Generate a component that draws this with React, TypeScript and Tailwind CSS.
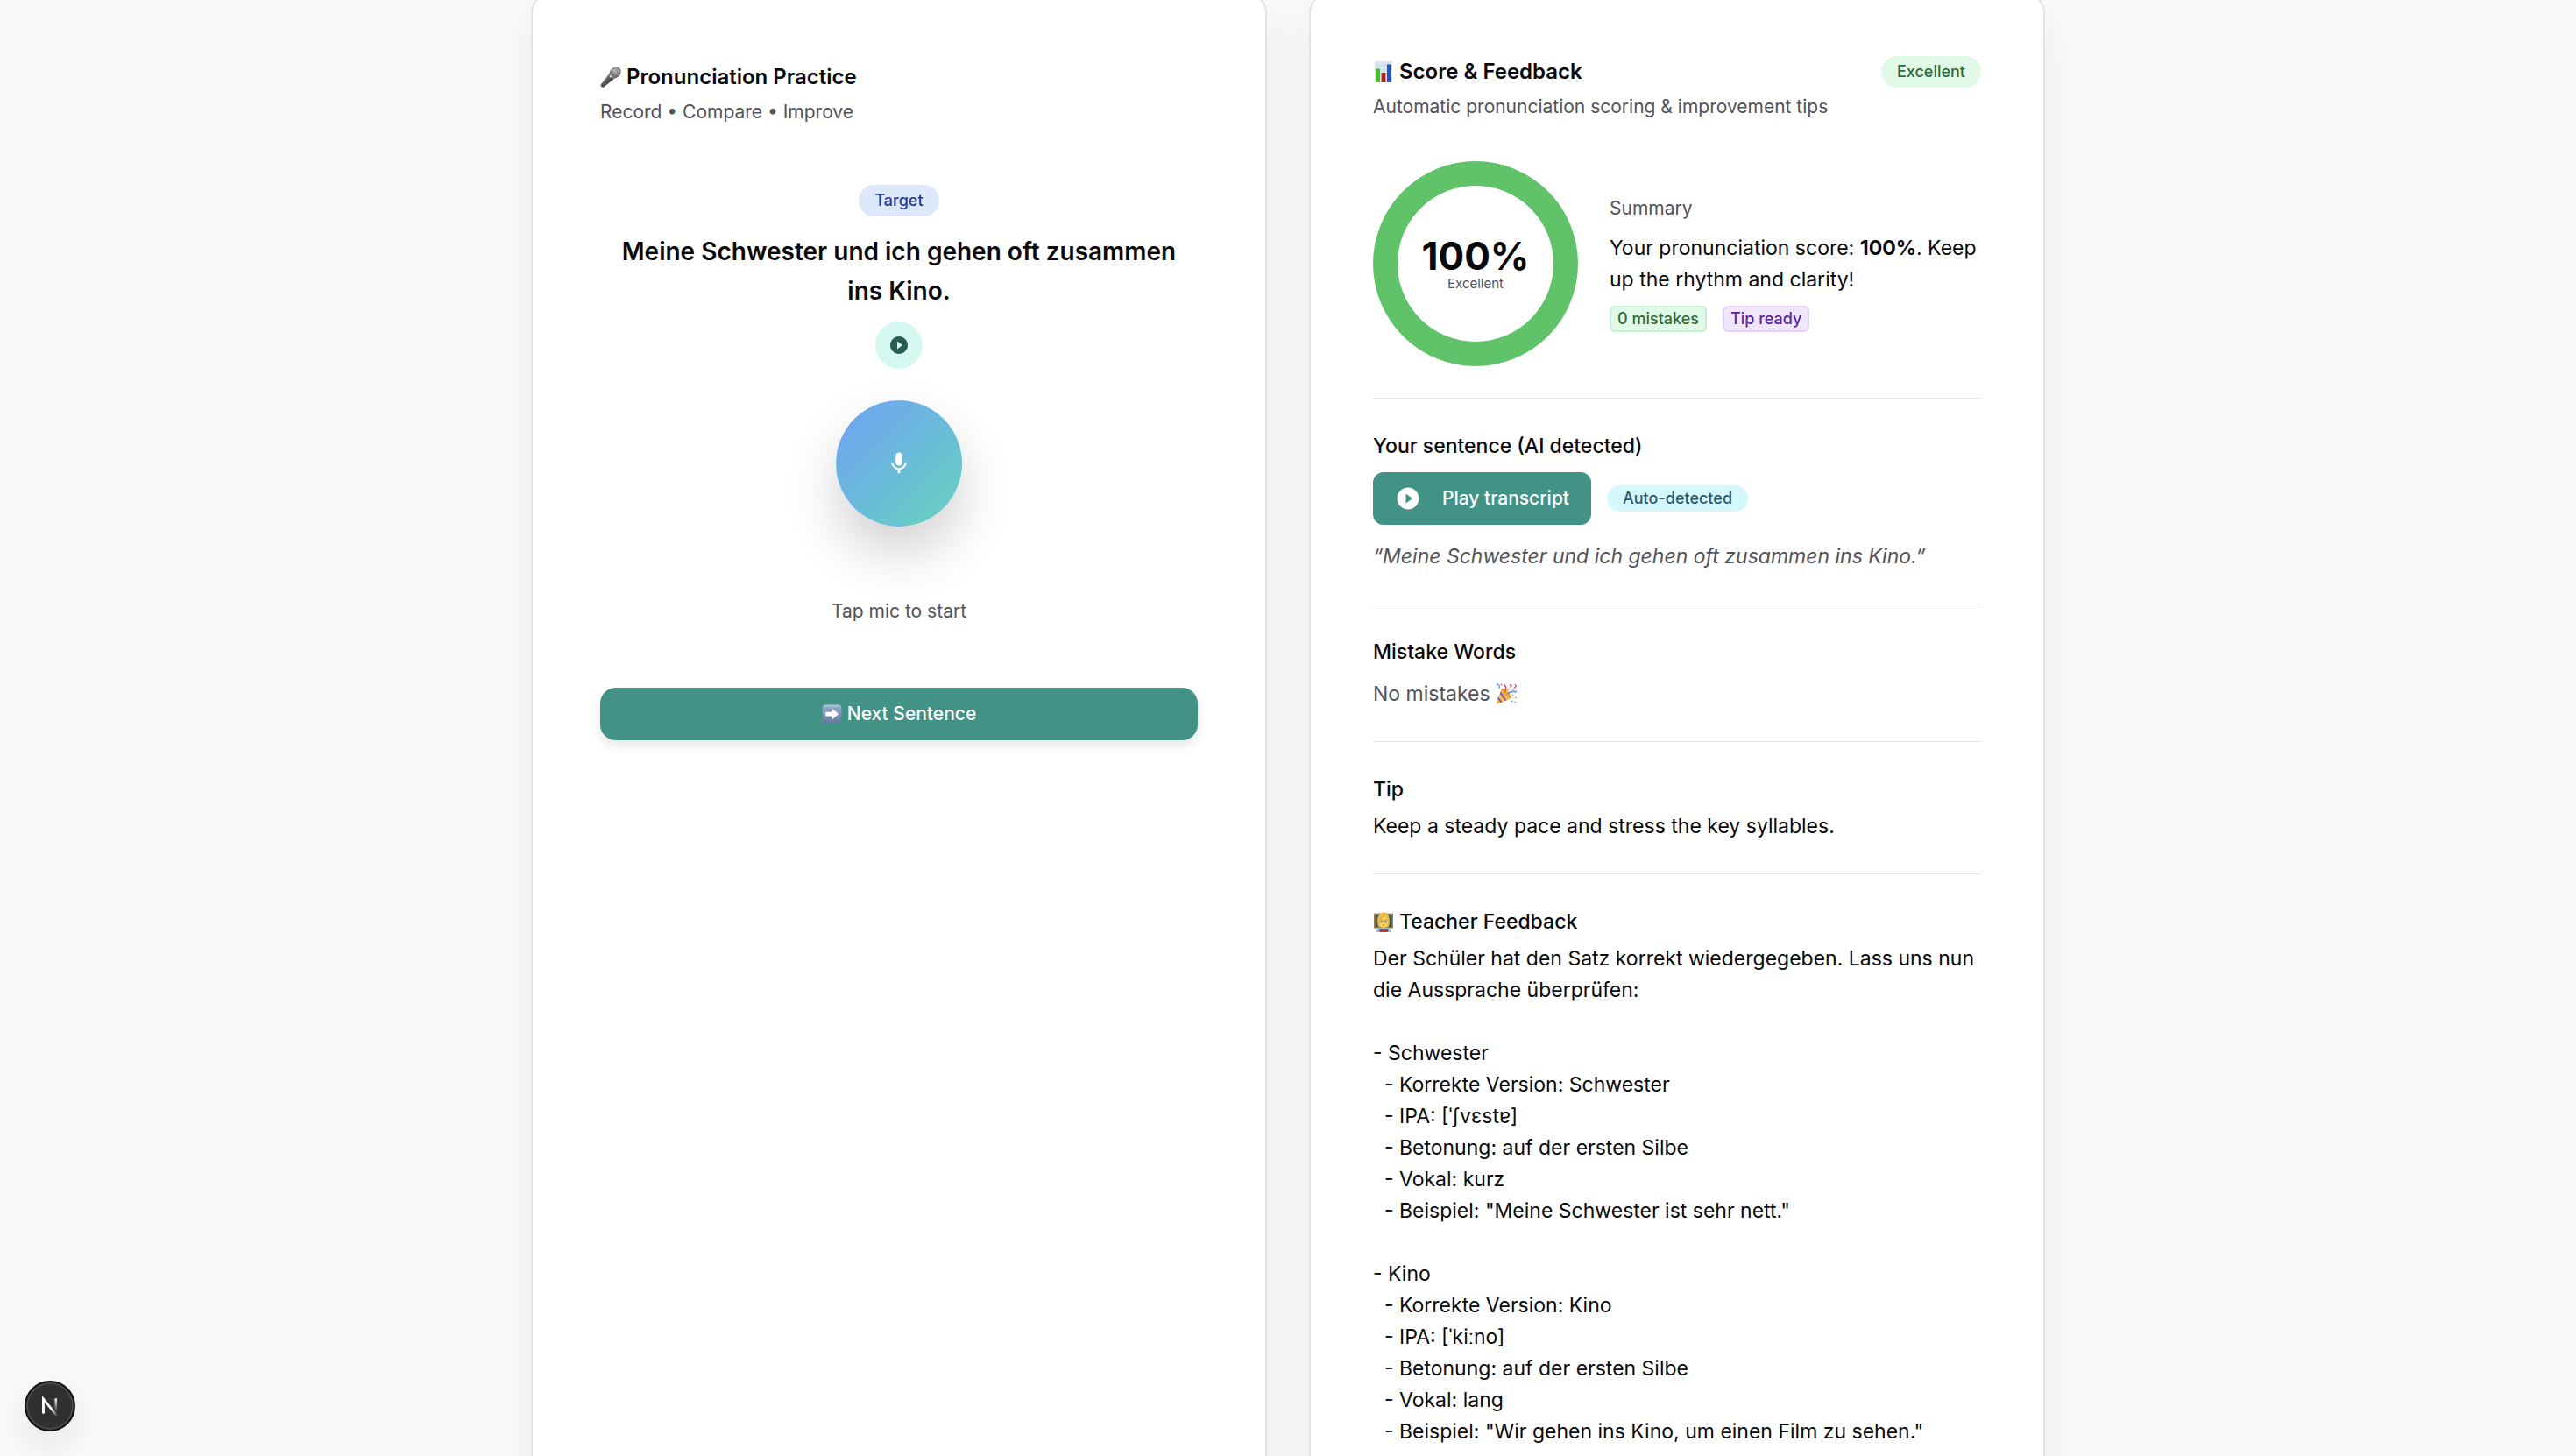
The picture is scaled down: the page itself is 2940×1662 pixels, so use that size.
import type { ReactNode } from "react";
import { MdMic, MdPlayCircleFilled } from "react-icons/md";

function MicrophoneIcon() {
  return (
    <svg viewBox="0 0 24 24" className="size-6 shrink-0" aria-hidden="true">
      <defs>
        <linearGradient id="mic-handle" x1="0" y1="0" x2="1" y2="1">
          <stop offset="0.3" stopColor="#8a8a8a" />
          <stop offset="0.55" stopColor="#4a4a4a" />
          <stop offset="0.8" stopColor="#1f1f1f" />
        </linearGradient>
        <radialGradient id="mic-head" cx="0.5" cy="0.35" r="0.7">
          <stop offset="0" stopColor="#b5b5b5" />
          <stop offset="1" stopColor="#4d4d4d" />
        </radialGradient>
      </defs>
      <path d="M11.6 6.6 L17.6 12.4 L4 23.6 Q2.6 24.2 1.2 23 Q0 21.8 0.6 20.4 Z" fill="url(#mic-handle)" />
      <path d="M10.6 9.2 C10.4 4 14 0.4 18.4 0.4 C21.6 0.4 23.8 2.8 23.6 5.8 C23.4 10 20 13.6 15 13.4 Z" fill="url(#mic-head)" />
      <path d="M10.6 8.4 L15.8 13.4" stroke="#a8a8a8" strokeWidth="1.1" />
      <path d="M14.2 3.4 L20.8 9.8 M17.8 1.6 L22.8 6.4" stroke="#c4c4c4" strokeWidth="0.7" />
      <circle cx="12" cy="11.4" r="1.1" fill="#e6e6e6" />
    </svg>
  );
}

function ChartIcon() {
  return (
    <svg viewBox="0 0 24 24" className="size-6 shrink-0" aria-hidden="true">
      <rect x="2" y="0" width="20" height="24" fill="#dde5ee" />
      <path d="M2 5 H22 M2 10 H22 M2 15 H22 M2 20 H22" stroke="#c6d2de" strokeWidth="0.6" />
      <rect x="3" y="8.5" width="5" height="15.5" fill="#4fb53c" />
      <rect x="9.6" y="13" width="4.8" height="11" fill="#b4261f" />
      <rect x="16" y="3.4" width="4.8" height="20.6" fill="#2556b8" />
    </svg>
  );
}

function PartyIcon() {
  return (
    <svg viewBox="0 0 24 24" className="size-6 shrink-0" aria-hidden="true">
      <path d="M7 6 L17 17.4 L2.4 23.6 Q0.4 24.2 0.6 22 Z" fill="#f2c14a" />
      <path d="M5.8 9.4 L12.6 19.2 L10.8 20 L4.8 11.8 Z M3.2 15.6 L7.4 21.4 L5.6 22.2 L2.4 18 Z" fill="#8a4fc4" />
      <path d="M6.4 6.4 C8.6 3.4 19 13.4 17.6 17.2 C14.6 18 6 10 6.4 6.4 Z" fill="#e0a832" />
      <path d="M10.6 9.4 C12.8 6.8 12.2 4 9.2 1" fill="none" stroke="#e0476a" strokeWidth="1.6" />
      <path d="M13.6 12.2 C16 9.2 19.2 8.8 23.8 9.8" fill="none" stroke="#5b8def" strokeWidth="1.9" />
      <path d="M12.6 9.6 L15.6 5.6" stroke="#f0b93c" strokeWidth="1.6" />
      <path d="M0.6 1.6 L2.8 1 L4.4 3.4 L3.6 6" fill="none" stroke="#5b8def" strokeWidth="1.2" />
      <path d="M16 1.4 L18.2 2.6 L16.6 4.6 M21.8 1 L23.4 3.4 L20.6 5.4" fill="none" stroke="#e0476a" strokeWidth="1.2" />
      <circle cx="6.4" cy="1.6" r="0.9" fill="#e0476a" />
      <circle cx="20" cy="7.2" r="0.8" fill="#5b8def" />
      <circle cx="19.6" cy="13.4" r="1" fill="#e98f7a" />
      <circle cx="22.8" cy="16.6" r="1" fill="#e98f7a" />
      <circle cx="18.4" cy="20.4" r="0.9" fill="#5b8def" />
      <circle cx="22.2" cy="21.4" r="0.9" fill="#e98f7a" />
    </svg>
  );
}

function TeacherIcon() {
  return (
    <svg viewBox="0 0 24 24" className="size-6 shrink-0" aria-hidden="true">
      <rect x="1" y="2.6" width="22" height="17" fill="#a87a48" />
      <rect x="2.4" y="4" width="19.2" height="14.2" fill="#3f6153" />
      <path d="M3.6 24 C4 20.2 7.6 18.8 12 18.8 C16.4 18.8 20 20.2 20.4 24 Z" fill="#8fbdea" />
      <path d="M5.6 15.6 C4.2 7.4 6.4 1.6 12 1.4 C17.6 1.4 19.8 7.4 18.4 15.6 C18 18 16.4 18.6 15 18.4 L9 18.4 C7.4 18.6 6 18 5.6 15.6 Z" fill="#efbb40" />
      <path d="M7.4 10 C8.4 8.6 11 7.6 13 5.6 C14 7.6 16 8.6 16.6 10 C17 15 15 18.8 12 18.8 C9 18.8 7 15 7.4 10 Z" fill="#fdd862" />
      <path d="M7.6 9.4 C10 8.6 12 7 13 4.6" fill="none" stroke="#cf9427" strokeWidth="0.6" />
      <circle cx="9.7" cy="11.6" r="1.8" fill="#fff0b8" stroke="#8a6330" strokeWidth="0.6" />
      <circle cx="14.3" cy="11.6" r="1.8" fill="#fff0b8" stroke="#8a6330" strokeWidth="0.6" />
      <circle cx="9.7" cy="11.7" r="0.7" fill="#4a3218" />
      <circle cx="14.3" cy="11.7" r="0.7" fill="#4a3218" />
      <path d="M10.2 15.6 Q12 17 13.8 15.6" fill="none" stroke="#b0682a" strokeWidth="0.8" />
      <rect x="7.6" y="21" width="9.6" height="3" fill="#cf2f2a" />
    </svg>
  );
}

function ArrowIcon() {
  return (
    <svg viewBox="0 0 24 24" className="size-[23px] shrink-0" aria-hidden="true">
      <defs>
        <linearGradient id="arrow-tile" x1="0" y1="0" x2="0" y2="1">
          <stop offset="0" stopColor="#b9cbe0" />
          <stop offset="0.15" stopColor="#8fa7c6" />
          <stop offset="1" stopColor="#60789c" />
        </linearGradient>
      </defs>
      <rect x="0.6" y="0.6" width="22.8" height="22.4" rx="4" fill="url(#arrow-tile)" />
      <path d="M4.4 9 H12 V5 L20 11.6 L12 18.2 V14.2 H4.4 Z" fill="#fff" />
    </svg>
  );
}

function NextLogo() {
  return (
    <svg viewBox="0 0 40 40" className="size-full" aria-hidden="true">
      <defs>
        <linearGradient id="n-diag" x1="18" y1="19" x2="26.5" y2="28.5" gradientUnits="userSpaceOnUse">
          <stop offset="0.35" stopColor="#fff" />
          <stop offset="1" stopColor="#fff" stopOpacity="0" />
        </linearGradient>
        <linearGradient id="n-stem" x1="24" y1="13" x2="24" y2="25" gradientUnits="userSpaceOnUse">
          <stop offset="0" stopColor="#fff" />
          <stop offset="1" stopColor="#fff" stopOpacity="0" />
        </linearGradient>
      </defs>
      <path d="M25.6 27.8 L14.4 14 V26" fill="none" stroke="url(#n-diag)" strokeWidth="2" />
      <path d="M14.4 14 V26.4" fill="none" stroke="#fff" strokeWidth="2" />
      <path d="M25 13.6 V25.6" fill="none" stroke="url(#n-stem)" strokeWidth="2" />
    </svg>
  );
}

function Card({ className, children }: { className: string; children: ReactNode }) {
  return (
    <section
      className={`flex flex-col rounded-3xl border-2 border-[#e4e4e7] bg-white shadow-[0_15px_60px_rgba(0,0,0,0.06)] ${className}`}
    >
      {children}
    </section>
  );
}

function CardTitle({ icon, title, subtitle }: { icon: ReactNode; title: string; subtitle: string }) {
  return (
    <div className="flex flex-col gap-1.5">
      <h2 className="flex items-center gap-1.5 text-2xl leading-9 font-semibold">
        {icon}
        {title}
      </h2>
      <p className="text-[21px] leading-8 text-[#52525b]">{subtitle}</p>
    </div>
  );
}

function Heading({ children }: { children: ReactNode }) {
  return <h3 className="flex items-center gap-1.5 text-[23px] leading-9 font-medium">{children}</h3>;
}

function Divider() {
  return <hr className="my-9 border-t border-[#e4e4e7]" />;
}

const feedback = `Der Schüler hat den Satz korrekt wiedergegeben. Lass uns nun die Aussprache überprüfen:

- Schwester
  - Korrekte Version: Schwester
  - IPA: [ˈʃvɛstɐ]
  - Betonung: auf der ersten Silbe
  - Vokal: kurz
  - Beispiel: "Meine Schwester ist sehr nett."

- Kino
  - Korrekte Version: Kino
  - IPA: [ˈkiːno]
  - Betonung: auf der ersten Silbe
  - Vokal: lang
  - Beispiel: "Wir gehen ins Kino, um einen Film zu sehen."`;

function PracticeCard() {
  return (
    <Card className="p-[77px]">
      <CardTitle icon={<MicrophoneIcon />} title="Pronunciation Practice" subtitle="Record • Compare • Improve" />

      <div className="mt-[67px] flex flex-col items-center">
        <span className="rounded-full bg-[#dde8fb] px-[18px] text-lg leading-9 font-medium text-[#1f3a9e]">Target</span>
        <p className="mt-[18px] max-w-[660px] text-center text-[28px] leading-[45px] font-semibold">
          Meine Schwester und ich gehen oft zusammen ins Kino.
        </p>
        <button
          type="button"
          aria-label="Play target sentence"
          className="mt-3 flex size-[54px] items-center justify-center rounded-full bg-[#d5f9f0] text-[#295a53]"
        >
          <MdPlayCircleFilled className="size-6" />
        </button>
        <button
          type="button"
          aria-label="Start recording"
          className="mt-9 flex size-36 items-center justify-center rounded-full border border-transparent bg-linear-to-br from-[#70a0f4] to-[#66d2bc] text-white shadow-[0_30px_60px_rgba(0,0,0,0.18)]"
        >
          <MdMic className="size-[30px]" />
        </button>
        <p className="mt-[81px] text-[21px] leading-8 text-[#52525b]">Tap mic to start</p>
      </div>

      <button
        type="button"
        className="mt-[71px] flex h-[60px] items-center justify-center gap-1.5 rounded-[18px] bg-[#439286] text-[21px] font-medium text-white shadow-[0_6px_12px_rgba(0,0,0,0.1)]"
      >
        <ArrowIcon />
        Next Sentence
      </button>
    </Card>
  );
}

function ScoreRing() {
  return (
    <div className="flex size-[234px] shrink-0 flex-col items-center justify-center rounded-full border-[28px] border-[#60c269]">
      <span className="text-[44px] leading-[46px] font-bold">100%</span>
      <span className="text-[15px] leading-[18px] text-[#52525b]">Excellent</span>
    </div>
  );
}

function ScoreCard() {
  return (
    <Card className="p-[71px]">
      <header className="flex items-start justify-between">
        <CardTitle
          icon={<ChartIcon />}
          title="Score & Feedback"
          subtitle="Automatic pronunciation scoring & improvement tips"
        />
        <span className="rounded-full bg-[#e1f9e7] px-[18px] text-lg leading-9 font-medium text-[#31693a]">
          Excellent
        </span>
      </header>

      <div className="mt-[46px] flex items-center gap-9">
        <ScoreRing />
        <div className="flex flex-col gap-3">
          <p className="text-[21px] leading-[30px] text-[#52525b]">Summary</p>
          <p className="-mr-4 text-[23px] leading-9">
            Your pronunciation score: <strong className="font-bold">100%</strong>. Keep up the rhythm and clarity!
          </p>
          <div className="flex gap-[18px] text-lg leading-[26px] font-medium">
            <span className="rounded-md border-2 border-[#c5f1d2] bg-[#e1f9e7] px-[7px] text-[#31693a]">
              0 mistakes
            </span>
            <span className="rounded-md border-2 border-[#e5d2fa] bg-[#f1e7fc] px-[7px] text-[#5b239c]">
              Tip ready
            </span>
          </div>
        </div>
      </div>

      <Divider />

      <Heading>Your sentence (AI detected)</Heading>
      <div className="mt-3 flex items-center gap-[18px]">
        <button
          type="button"
          className="flex h-[60px] items-center gap-6 rounded-xl bg-[#439286] px-[25px] text-[21px] font-medium text-white"
        >
          <MdPlayCircleFilled className="size-[30px]" />
          Play transcript
        </button>
        <span className="rounded-full bg-[#d5f8fd] px-[18px] text-lg leading-[30px] font-medium text-[#2b5a70]">
          Auto-detected
        </span>
      </div>
      <p className="mt-[18px] text-[23px] leading-9 text-[#52525b] italic">
        “Meine Schwester und ich gehen oft zusammen ins Kino.”
      </p>

      <Divider />

      <Heading>Mistake Words</Heading>
      <p className="mt-3 flex items-center gap-1.5 text-[23px] leading-9 text-[#52525b]">
        No mistakes
        <PartyIcon />
      </p>

      <Divider />

      <Heading>Tip</Heading>
      <p className="mt-1.5 text-[23px] leading-9">Keep a steady pace and stress the key syllables.</p>

      <Divider />

      <Heading>
        <TeacherIcon />
        Teacher Feedback
      </Heading>
      <p className="mt-1.5 -mr-4 text-[23px] leading-9 whitespace-pre-wrap">{feedback}</p>
    </Card>
  );
}

export default function App() {
  return (
    <div className="h-screen overflow-x-hidden overflow-y-auto bg-[#fafafa] font-['Inter','Noto_Sans',sans-serif] text-[#09090b] [scrollbar-width:none]">
      <main className="mx-auto -mt-[9px] grid max-w-[1728px] grid-cols-2 gap-12">
        <PracticeCard />
        <ScoreCard />
      </main>
      <button
        type="button"
        aria-label="Open Next.js Dev Tools"
        className="fixed bottom-7 left-7 size-[58px] rounded-full border-2 border-[#141414] bg-[#303030] shadow-[inset_0_0_0_2px_#484848,0_15px_45px_rgba(0,0,0,0.1)]"
      >
        <NextLogo />
      </button>
    </div>
  );
}
